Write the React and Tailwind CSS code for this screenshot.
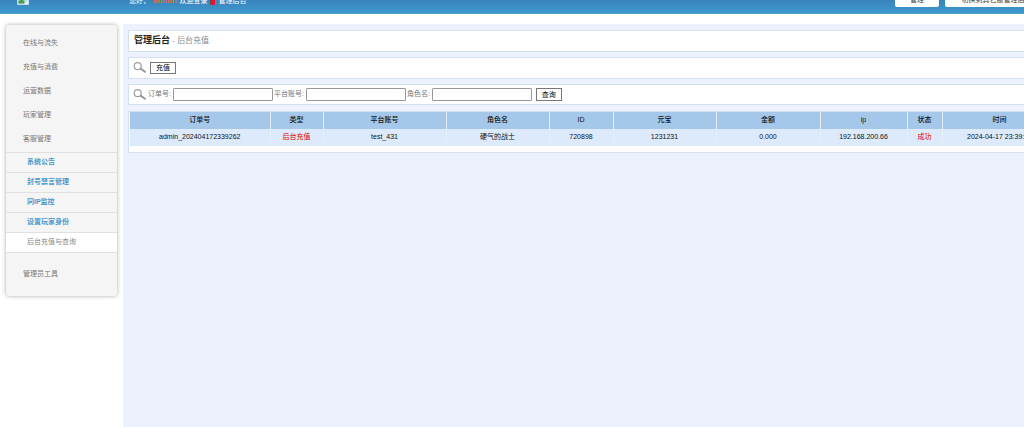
const MENU = ["在线与流失", "充值与消费", "运营数据", "玩家管理", "客服管理"];

const SUB_MENU = ["系统公告", "封号禁言管理", "同IP监控", "设置玩家身份", "后台充值与查询"];

const COLUMNS = [
  { title: "订单号", value: "admin_202404172339262", width: "w-[140px]" },
  { title: "类型", value: "后台充值", width: "w-[53px]", red: true },
  { title: "平台账号", value: "test_431", width: "w-[123px]" },
  { title: "角色名", value: "硬气的战士", width: "w-[103px]" },
  { title: "ID", value: "720898", width: "w-[64px]" },
  { title: "元宝", value: "1231231", width: "w-[103px]" },
  { title: "金额", value: "0.000", width: "w-[104px]" },
  { title: "ip", value: "192.168.200.66", width: "w-[87px]" },
  { title: "状态", value: "成功", width: "w-[35px]", red: true },
  { title: "时间", value: "2024-04-17 23:39:26", width: "w-[115px]" },
];

const FIELDS = [
  { id: "order", label: "订单号:" },
  { id: "account", label: "平台账号:" },
  { id: "role", label: "角色名:" },
];

function SearchIcon() {
  return (
    <svg viewBox="0 0 14 14" className="size-[14px] shrink-0" fill="none" aria-hidden="true">
      <circle cx="4.7" cy="5.2" r="3.5" stroke="#a0a0a0" strokeWidth="1.2" />
      <path d="M7.6 7.6 12 10.8" stroke="#999" strokeWidth="2" strokeLinecap="round" />
    </svg>
  );
}

function BrokenImage() {
  return (
    <svg viewBox="0 0 12 12" className="size-3" aria-hidden="true">
      <path d="M.5.5h8l3 3v8H.5z" fill="#b9d8f2" stroke="#c5dcec" />
      <path d="M1.5 10.5V8.500l3-3 3 3v2z" fill="#4ba045" />
      <path d="m7 11 4-4v4z" fill="#e8f2ea" />
    </svg>
  );
}

function Panel({ children, className = "" }) {
  return (
    <div className={`flex items-center border border-[#d4dff0] bg-white ${className}`}>{children}</div>
  );
}

function Header() {
  return (
    <header className="flex h-[14px] items-start justify-between overflow-hidden border-b border-[#4b9fd3] bg-linear-to-b from-[#3884bb] to-[#3f98d2]">
      <div className="-mt-[7px] flex items-start">
        <div className="w-[129px] pl-[17px]">
          <BrokenImage />
        </div>
        <p className="flex items-center gap-[3px] text-[7px] leading-4 whitespace-nowrap text-white">
          <span>您好，</span>
          <strong className="text-[8px] text-[#d9713c]">admin</strong>
          <span>欢迎登录</span>
          <span className="text-[#f01030]">█</span>
          <span>管理后台</span>
        </p>
      </div>
      <div className="-mt-3 flex shrink-0 gap-[6px] text-[7px] text-[#333]">
        <button className="h-[19px] w-[44px] rounded-[2px] bg-white pt-[6px]">管理</button>
        <button className="-mr-6 h-[19px] w-[103px] rounded-[2px] bg-white pt-[6px] whitespace-nowrap">切换到其它服管理后台</button>
      </div>
    </header>
  );
}

function Sidebar() {
  return (
    <nav className="mt-[11px] ml-[6px] w-[111px] shrink-0 self-start rounded-[3px] bg-[#f5f5f5] pt-[6px] pb-[10px] text-[7px] text-[#777] shadow-[0_0_4px_#aaa]">
      {MENU.map((item) => (
        <a key={item} href="#" className="flex h-6 items-center pl-[17px]">
          {item}
        </a>
      ))}
      <ul className="mt-px mb-[9px] border-b border-[#e0e0e0]">
        {SUB_MENU.map((item) => (
          <li key={item} className="border-t border-[#e0e0e0] font-bold text-[#4a9acb] last:bg-white last:font-normal last:text-[#888]">
            <a href="#" className="flex h-[19px] items-center pl-[21px]">{item}</a>
          </li>
        ))}
      </ul>
      <a href="#" className="flex h-6 items-center pl-[17px]">管理员工具</a>
    </nav>
  );
}

export default function App() {
  return (
    <div className="flex min-h-screen flex-col overflow-hidden bg-white font-['Liberation_Sans','Noto_Sans_CJK_SC',sans-serif]">
      <Header />
      <div className="flex flex-1">
        <Sidebar />
        <main className="mt-[10px] ml-[6px] min-w-0 flex-1 overflow-hidden bg-[#edf0fd] pt-[6px] pl-[5px]">
          <div className="w-full min-w-[931px]">
            <Panel className="h-[22px] px-[5px]">
              <h1 className="text-[8px] text-[#888]">
                <strong className="text-[9px] text-[#222]">管理后台</strong> - 后台充值
              </h1>
            </Panel>
            <Panel className="mt-[5px] h-[22px] gap-[3px] px-[4px]">
              <SearchIcon />
              <button className="h-3 w-[26px] border border-[#777] bg-white text-[7px] leading-[10px] text-black">充值</button>
            </Panel>
            <Panel className="mt-[5px] h-[21px] px-[4px] text-[7px] text-[#777]">
              <SearchIcon />
              <form className="flex items-center gap-px pl-px" onSubmit={(e) => e.preventDefault()}>
                {FIELDS.map(({ id, label }) => (
                  <div key={id} className="flex items-center gap-[2px]">
                    <label htmlFor={id} className="whitespace-nowrap">{label}</label>
                    <input id={id} type="text" className="h-[13px] w-[100px] rounded-[1px] border border-[#999] bg-white px-[2px]" />
                  </div>
                ))}
                <button className="ml-[3px] h-[13px] w-[26px] border border-[#777] bg-white text-[7px] leading-[10px] text-black">查询</button>
              </form>
            </Panel>
            <div className="mt-[6px] border border-[#d4dff0] bg-white px-px pb-[6px]">
              <table className="w-full table-fixed border-collapse text-center text-[7px] text-[#111]">
                <thead>
                  <tr className="h-[17px] bg-[#a5c8ea]">
                    {COLUMNS.map(({ title, width }) => (
                      <th key={title} className={`border-r border-[#e4effb] p-0 font-medium ${width}`}>{title}</th>
                    ))}
                  </tr>
                </thead>
                <tbody>
                  <tr className="h-[17px] bg-[#dceafb]">
                    {COLUMNS.map(({ title, value, red }) => (
                      <td key={title} className={`border-r border-[#e4effb] p-0 whitespace-nowrap ${red ? "text-[#e00000]" : ""}`}>{value}</td>
                    ))}
                  </tr>
                </tbody>
              </table>
            </div>
          </div>
        </main>
      </div>
    </div>
  );
}
